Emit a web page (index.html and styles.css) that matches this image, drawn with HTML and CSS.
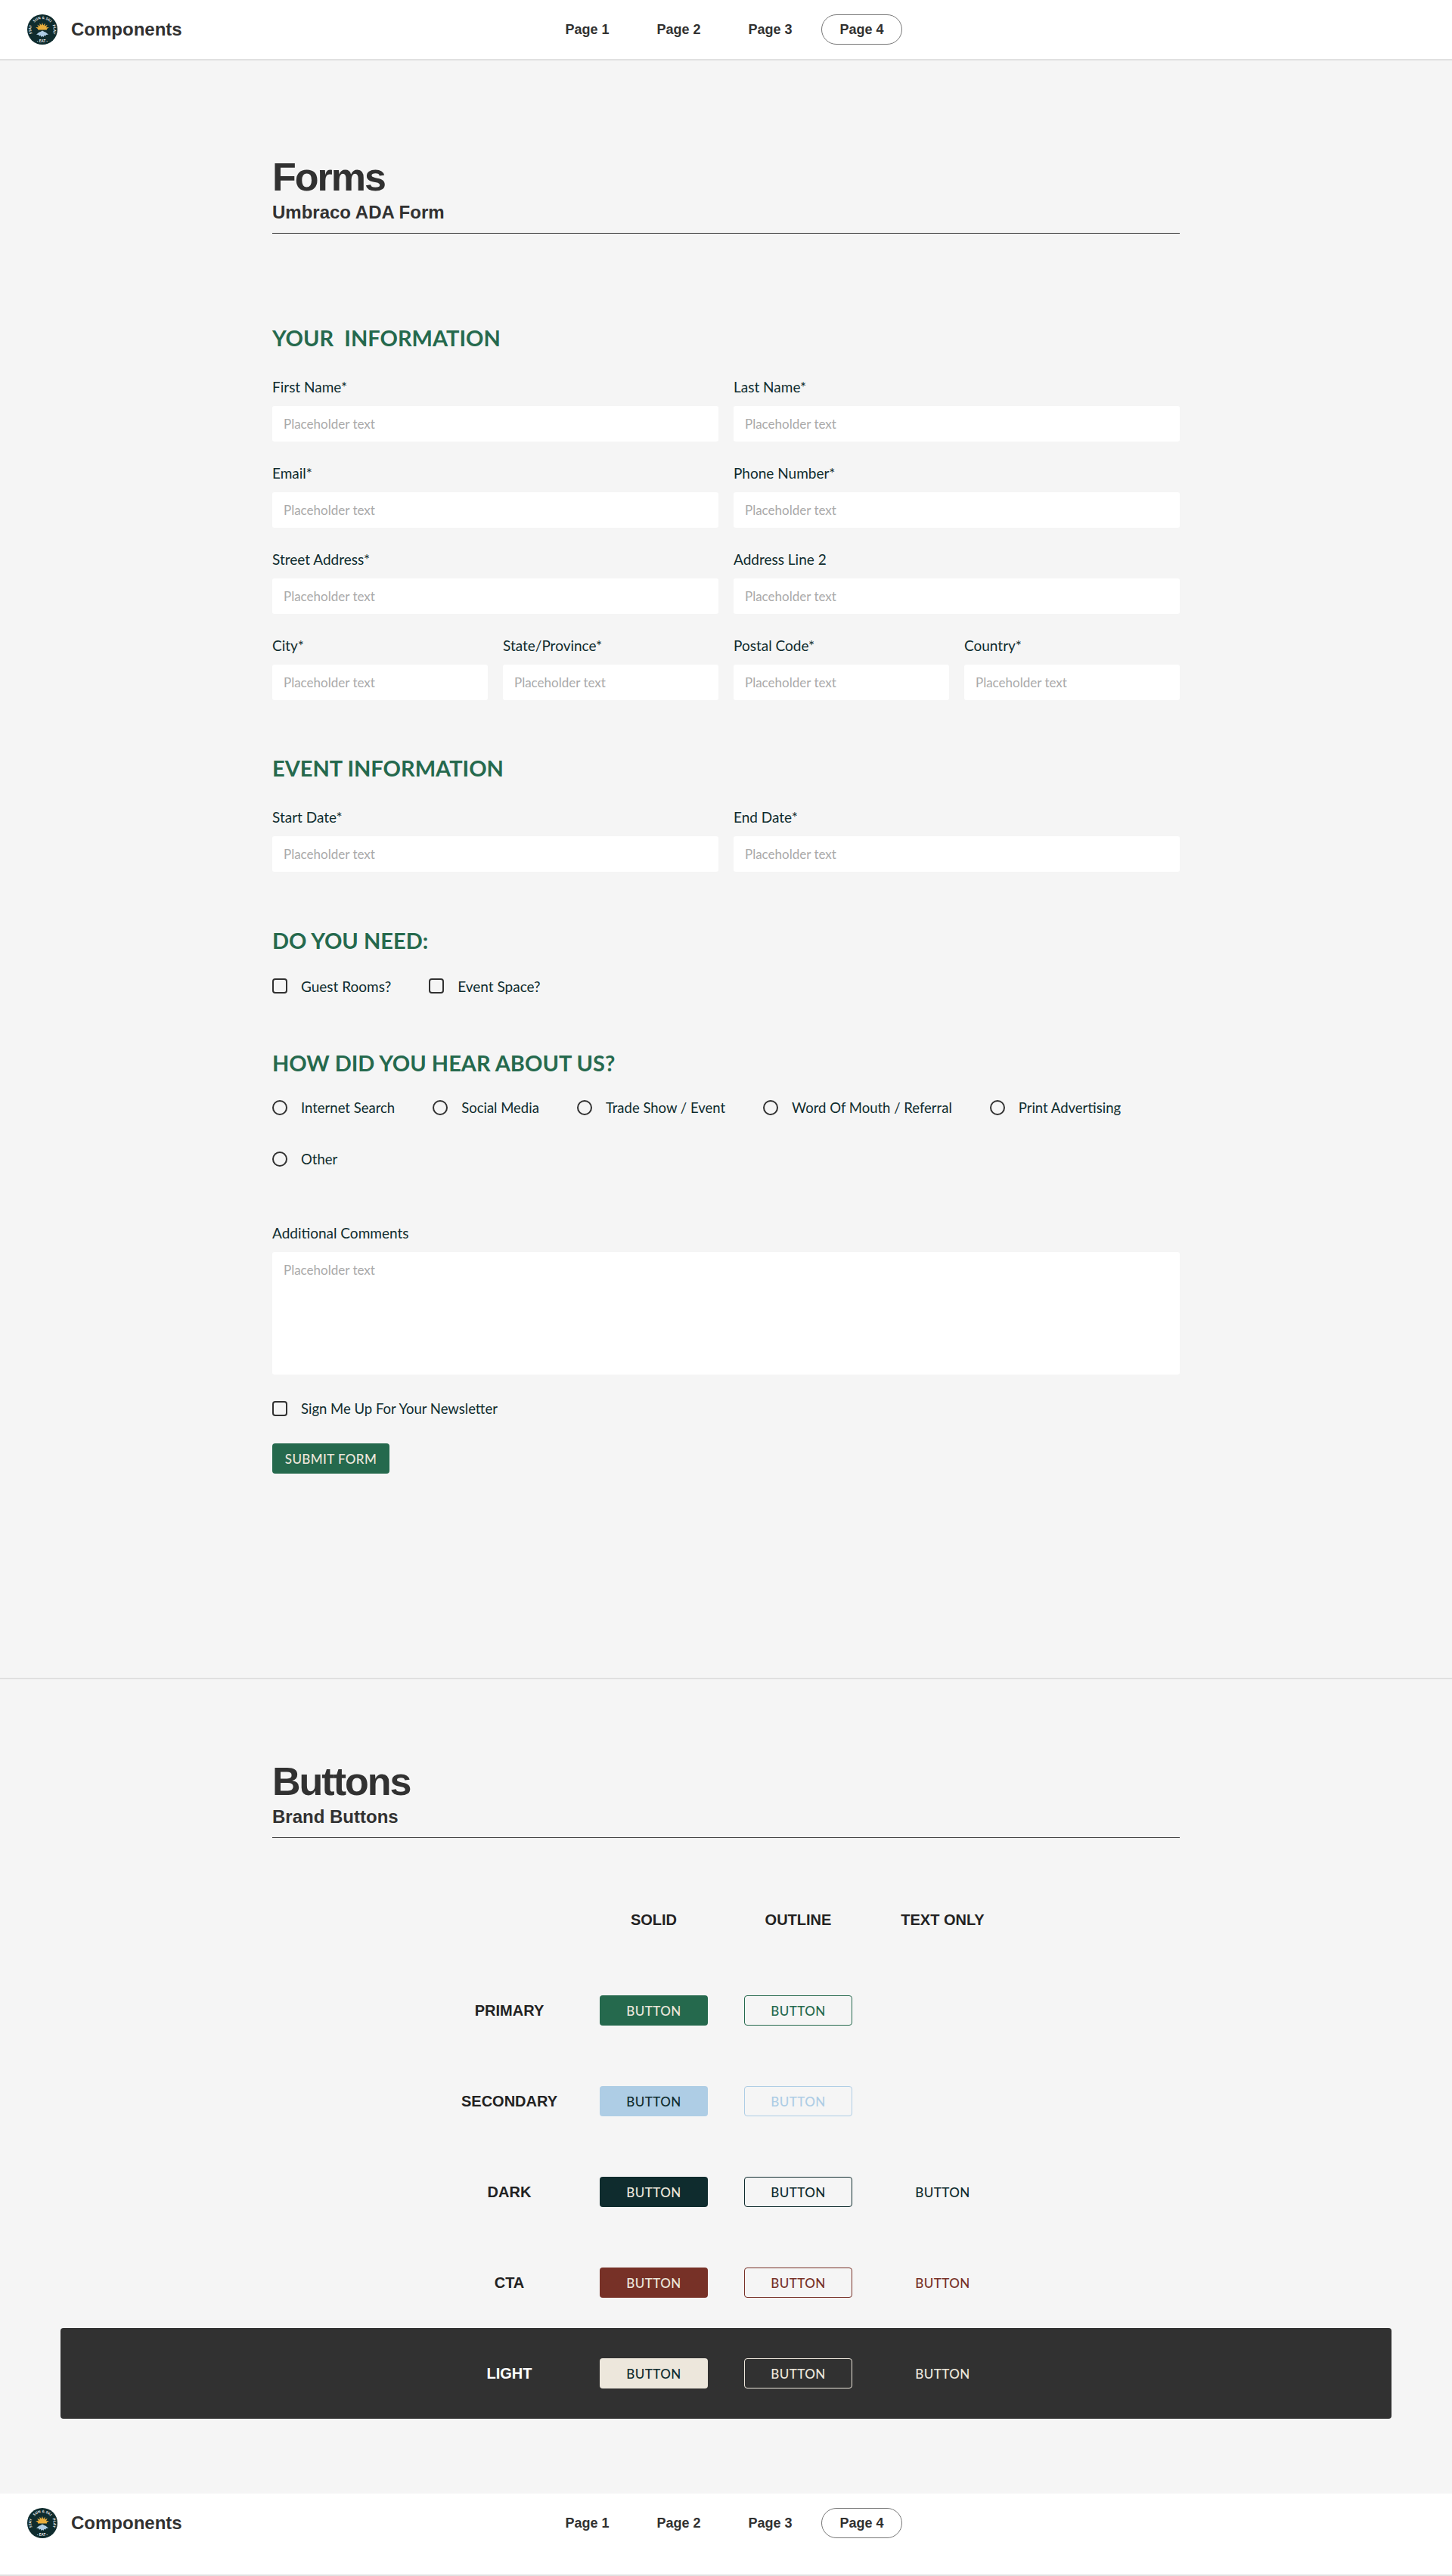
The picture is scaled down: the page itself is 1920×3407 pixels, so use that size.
FILE: index.html
```html
<!DOCTYPE html>
<html lang="en">
<head>
  <meta charset="UTF-8" />
  <meta name="viewport" content="width=device-width, initial-scale=1.0" />
  <title>Components</title>
  <link rel="stylesheet" href="styles.css">
</head>
<body>
  <header class="site-nav">
    <a class="brand" href="#">
      <svg class="logo" viewBox="0 0 40 40" aria-hidden="true">
        <defs>
          <path id="arc-top" d="M7.900 13A14 14 0 0 1 32.100 13" />
          <path id="arc-left" d="M8.500 29A14.500 14.500 0 0 1 8.500 11" />
          <path id="arc-right" d="M31.500 11A14.500 14.500 0 0 1 31.500 29" />
        </defs>
        <g id="logo-mark">
          <circle cx="20" cy="20" r="20" fill="#0f2c2e" />
          <polygon fill="#e9ad3c" points="14,20.500 14.100,19.300 11.200,16.900 15,17.200 13.300,13.800 16.700,15.500 16.400,11.700 18.800,14.600 20,11 21.200,14.600 23.600,11.700 23.300,15.500 26.700,13.800 25,17.200 28.800,16.900 25.900,19.300 26,20.500" />
          <polygon fill="#aecde5" points="20,21.500 22.500,23.100 24.500,23.700 28,26.700 25,26.900 24,28.700 22.400,27.700 21.600,30.100 20,28.700 18.400,30.100 17.600,27.700 16,28.700 15,26.900 12,26.700 15.500,23.700 17.500,23.100" />
          <g class="logo-text">
            <text><textPath href="#arc-top" startOffset="50%" text-anchor="middle">SUN &amp; SKI</textPath></text>
            <text><textPath href="#arc-left" startOffset="50%" text-anchor="middle">STAY</textPath></text>
            <text><textPath href="#arc-right" startOffset="50%" text-anchor="middle">PLAY</textPath></text>
            <text x="20" y="36.500" text-anchor="middle">· EAT ·</text>
          </g>
        </g>
      </svg>
      <span class="brand-name">Components</span>
    </a>
    <nav class="nav-links">
      <a href="#">Page 1</a>
      <a href="#">Page 2</a>
      <a href="#">Page 3</a>
      <a class="active" href="#">Page 4</a>
    </nav>
  </header>

  <section class="section forms-section">
    <div class="container">
      <h1 class="section-title">Forms</h1>
      <h2 class="section-sub">Umbraco ADA Form</h2>

      <form class="ada-form">
        <h3 class="form-heading first">YOUR&nbsp; INFORMATION</h3>
        <div class="field-grid">
          <div class="field half"><label>First Name*</label><input type="text" placeholder="Placeholder text" /></div>
          <div class="field half"><label>Last Name*</label><input type="text" placeholder="Placeholder text" /></div>
          <div class="field half"><label>Email*</label><input type="text" placeholder="Placeholder text" /></div>
          <div class="field half"><label>Phone Number*</label><input type="text" placeholder="Placeholder text" /></div>
          <div class="field half"><label>Street Address*</label><input type="text" placeholder="Placeholder text" /></div>
          <div class="field half"><label>Address Line 2</label><input type="text" placeholder="Placeholder text" /></div>
          <div class="field"><label>City*</label><input type="text" placeholder="Placeholder text" /></div>
          <div class="field"><label>State/Province*</label><input type="text" placeholder="Placeholder text" /></div>
          <div class="field"><label>Postal Code*</label><input type="text" placeholder="Placeholder text" /></div>
          <div class="field"><label>Country*</label><input type="text" placeholder="Placeholder text" /></div>
        </div>

        <h3 class="form-heading event">EVENT INFORMATION</h3>
        <div class="field-grid">
          <div class="field half"><label>Start Date*</label><input type="text" placeholder="Placeholder text" /></div>
          <div class="field half"><label>End Date*</label><input type="text" placeholder="Placeholder text" /></div>
        </div>

        <h3 class="form-heading need">DO YOU NEED:</h3>
        <div class="choice-row need-row">
          <label class="choice"><input type="checkbox" /> Guest Rooms?</label>
          <label class="choice"><input type="checkbox" /> Event Space?</label>
        </div>

        <h3 class="form-heading hear">HOW DID YOU HEAR ABOUT US?</h3>
        <div class="choice-row radio-row">
          <label class="choice"><input type="radio" name="hear" /> Internet Search</label>
          <label class="choice"><input type="radio" name="hear" /> Social Media</label>
          <label class="choice"><input type="radio" name="hear" /> Trade Show / Event</label>
          <label class="choice"><input type="radio" name="hear" /> Word Of Mouth / Referral</label>
          <label class="choice"><input type="radio" name="hear" /> Print Advertising</label>
          <label class="choice"><input type="radio" name="hear" /> Other</label>
        </div>

        <div class="field comments">
          <label>Additional Comments</label>
          <textarea placeholder="Placeholder text"></textarea>
        </div>

        <label class="choice newsletter"><input type="checkbox" /> Sign Me Up For Your Newsletter</label>

        <button class="btn primary submit" type="submit">SUBMIT FORM</button>
      </form>
    </div>
  </section>

  <section class="section buttons-section">
    <div class="container">
      <h1 class="section-title">Buttons</h1>
      <h2 class="section-sub">Brand Buttons</h2>
    </div>

    <div class="button-table">
      <div class="table-row head">
        <span></span>
        <span class="col-title">SOLID</span>
        <span class="col-title">OUTLINE</span>
        <span class="col-title">TEXT ONLY</span>
      </div>
      <div class="table-row">
        <span class="row-title">PRIMARY</span>
        <a class="btn primary" href="#">BUTTON</a>
        <a class="btn primary-outline" href="#">BUTTON</a>
        <span></span>
      </div>
      <div class="table-row">
        <span class="row-title">SECONDARY</span>
        <a class="btn secondary" href="#">BUTTON</a>
        <a class="btn secondary-outline" href="#">BUTTON</a>
        <span></span>
      </div>
      <div class="table-row">
        <span class="row-title">DARK</span>
        <a class="btn dark" href="#">BUTTON</a>
        <a class="btn dark-outline" href="#">BUTTON</a>
        <a class="btn dark-text" href="#">BUTTON</a>
      </div>
      <div class="table-row">
        <span class="row-title">CTA</span>
        <a class="btn cta" href="#">BUTTON</a>
        <a class="btn cta-outline" href="#">BUTTON</a>
        <a class="btn cta-text" href="#">BUTTON</a>
      </div>
      <div class="table-row light-row">
        <span class="row-title">LIGHT</span>
        <a class="btn light" href="#">BUTTON</a>
        <a class="btn light-outline" href="#">BUTTON</a>
        <a class="btn light-text" href="#">BUTTON</a>
      </div>
    </div>
  </section>

  <footer class="site-nav bottom">
    <a class="brand" href="#">
      <svg class="logo" viewBox="0 0 40 40" aria-hidden="true"><use href="#logo-mark" /></svg>
      <span class="brand-name">Components</span>
    </a>
    <nav class="nav-links">
      <a href="#">Page 1</a>
      <a href="#">Page 2</a>
      <a href="#">Page 3</a>
      <a class="active" href="#">Page 4</a>
    </nav>
  </footer>
</body>
</html>
```

FILE: styles.css
```css
* {
  box-sizing: border-box;
}

body {
  margin: 0;
  background-color: #f5f5f5;
  color: #0f2c2e;
  font-family: 'Lato', sans-serif;
}

a {
  text-decoration: none;
}

/* top and bottom bar */
.site-nav {
  display: grid;
  grid-template-columns: 1fr auto 1fr;
  align-items: start;
  height: 80px;
  padding: 19px 40px 0 36px;
  background-color: white;
  border-bottom: 2px solid #e0e0e0;
}

.site-nav.bottom {
  height: 109px;
}

.brand {
  display: flex;
  align-items: center;
  gap: 18px;
  height: 40px;
  color: #313131;
  font-family: 'Liberation Sans', sans-serif;
  font-weight: bold;
  font-size: 24px;
}

.logo {
  display: block;
  width: 40px;
  height: 40px;
}

.logo-text text {
  fill: white;
  font-family: 'Lato', sans-serif;
  font-weight: bold;
  font-size: 4.600px;
  letter-spacing: 0.15px;
}

.nav-links {
  display: flex;
  gap: 14px;
}

.nav-links a {
  display: flex;
  align-items: center;
  justify-content: center;
  width: 107px;
  height: 40px;
  border: 1px solid transparent;
  border-radius: 20px;
  color: #313131;
  font-family: 'Liberation Sans', sans-serif;
  font-weight: bold;
  font-size: 18px;
}

.nav-links a.active {
  border-color: #777;
}

/* sections */
.section {
  border-bottom: 2px solid #e0e0e0;
}

.forms-section {
  height: 2141px;
  padding-top: 128px;
}

.buttons-section {
  height: 1077px;
  padding-top: 109px;
  border-bottom: none;
}

.container {
  width: 1200px;
  margin: 0 auto;
}

.section-title {
  margin: 0;
  color: #313131;
  font-family: 'Liberation Sans', sans-serif;
  font-weight: bold;
  font-size: 52px;
  line-height: 52px;
  letter-spacing: -2px;
}

.section-sub {
  margin: 4px 0 0;
  padding-bottom: 11px;
  border-bottom: 1px solid #313131;
  color: #313131;
  font-family: 'Liberation Sans', sans-serif;
  font-weight: bold;
  font-size: 24px;
  line-height: 33px;
}

/* form */
.form-heading {
  margin: 0;
  color: #25694d;
  font-weight: bold;
  font-size: 29px;
  line-height: 36px;
}

.form-heading.first {
  margin-top: 120px;
}

.form-heading.event {
  margin-top: 72px;
}

.form-heading.need {
  margin-top: 73px;
}

.form-heading.hear {
  margin-top: 64px;
}

.field-grid {
  display: grid;
  grid-template-columns: repeat(4, 285px);
  gap: 31px 20px;
  margin-top: 36px;
}

.field {
  display: flex;
  flex-direction: column;
  gap: 14px;
}

.field.half {
  grid-column: span 2;
}

.field label {
  font-size: 19px;
  line-height: 22px;
}

.field input,
.field textarea {
  display: block;
  width: 100%;
  height: 47px;
  padding: 0 15px;
  border: none;
  border-radius: 3px;
  background-color: white;
  color: #0f2c2e;
  font-family: 'Lato', sans-serif;
  font-size: 17px;
}

.field textarea {
  height: 162px;
  padding: 13px 15px;
  resize: none;
}

.field input::placeholder,
.field textarea::placeholder {
  color: #aaa;
  opacity: 1;
}

.choice-row {
  display: flex;
  flex-wrap: wrap;
}

.need-row {
  gap: 0 50px;
  margin-top: 22px;
}

.radio-row {
  gap: 28px 50px;
  margin-top: 21px;
}

.choice {
  display: flex;
  align-items: center;
  gap: 18px;
  height: 40px;
  font-size: 18.500px;
}

.need-row .choice {
  font-size: 19px;
}

.choice input {
  appearance: none;
  width: 20px;
  height: 20px;
  margin: 0;
  border: 2px solid #313131;
  border-radius: 4px;
  background-color: transparent;
}

.choice input[type="radio"] {
  border-radius: 50%;
}

.field.comments {
  margin-top: 67px;
}

.newsletter {
  margin-top: 25px;
}

/* buttons */
.btn {
  display: flex;
  align-items: center;
  justify-content: center;
  width: 143px;
  height: 40px;
  border: 1px solid transparent;
  border-radius: 4px;
  font-family: 'Lato', sans-serif;
  font-weight: 500;
  font-size: 17px;
  letter-spacing: 0.4px;
}

.btn.submit {
  width: 155px;
  margin-top: 26px;
  cursor: pointer;
}

.primary { background-color: #25694d; color: #ede7dc; }
.primary-outline { border-color: #25694d; color: #25694d; }
.secondary { background-color: #aecde5; color: #0f2c2e; }
.secondary-outline { border-color: #aecde5; color: #aecde5; }
.dark { background-color: #0f2c2e; color: #ede7dc; }
.dark-outline { border-color: #0f2c2e; color: #0f2c2e; }
.dark-text { color: #0f2c2e; }
.cta { background-color: #773127; color: #ede7dc; }
.cta-outline { border-color: #773127; color: #773127; }
.cta-text { color: #773127; }
.light { background-color: #ede7dc; color: #0f2c2e; }
.light-outline { border-color: #ede7dc; color: #ede7dc; }
.light-text { color: #ede7dc; }

.button-table {
  display: flex;
  flex-direction: column;
  gap: 80px;
  margin-top: 88px;
}

.table-row {
  display: grid;
  grid-template-columns: repeat(4, 143px);
  gap: 48px;
  justify-content: center;
  align-items: center;
  height: 40px;
}

.col-title,
.row-title {
  color: #222;
  font-family: 'Liberation Sans', sans-serif;
  font-weight: bold;
  font-size: 20px;
  text-align: center;
}

.light-row {
  height: 120px;
  margin: -40px 80px 0;
  border-radius: 4px;
  background-color: #313131;
}

.light-row .row-title {
  color: white;
}
```
